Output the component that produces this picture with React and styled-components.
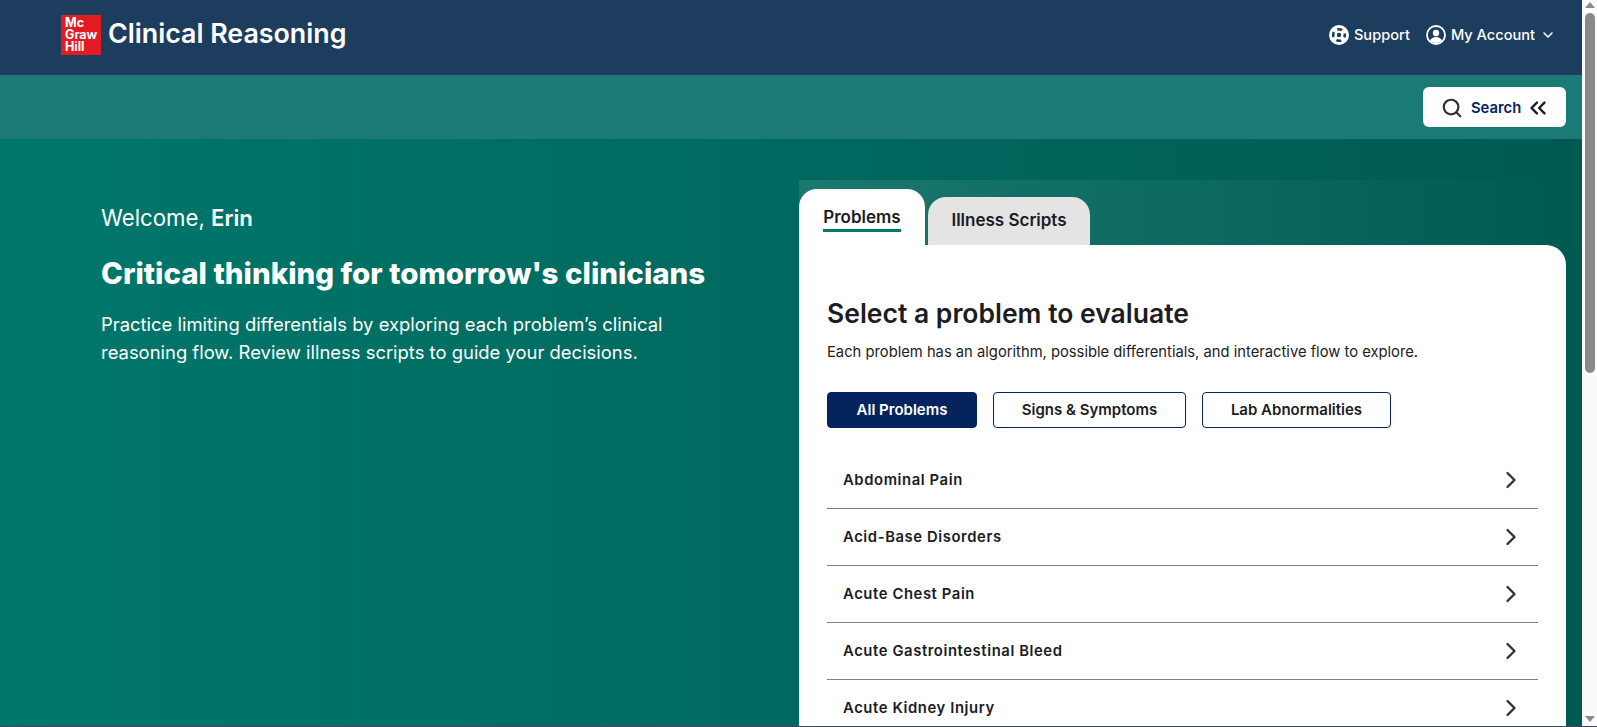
import styled, { createGlobalStyle } from "styled-components";
import { ChevronDown, ChevronRight, ChevronsLeft, Search } from "lucide-react";

const GlobalStyle = createGlobalStyle`
  html, body {
    margin: 0;
    padding: 0;
  }
  body {
    font-family: "Inter", "Liberation Sans", sans-serif;
    color: #1b1c25;
    background: #fafafa;
    padding-right: 15px;
  }
  * {
    box-sizing: border-box;
  }
`;

const Header = styled.header`
  height: 75px;
  background: #1d3d5e;
  display: flex;
  align-items: center;
  justify-content: space-between;
  padding: 0 26px 5px 61px;
  color: #fff;
`;

const Brand = styled.div`
  display: flex;
  align-items: center;
  gap: 7px;
`;

const Logo = styled.div`
  width: 40px;
  height: 40px;
  background: #e31b23;
  color: #fff;
  font-size: 12.5px;
  font-weight: 700;
  line-height: 12px;
  padding: 2px 0 0 4px;
`;

const AppName = styled.div`
  font-size: 26.8px;
  font-weight: 600;
  margin-bottom: 4px;
`;

const HeaderNav = styled.nav`
  display: flex;
  align-items: center;
  gap: 16px;
`;

const NavItem = styled.a`
  display: flex;
  align-items: center;
  gap: 5px;
  font-size: 14.6px;
  font-weight: 500;
`;

const SearchBar = styled.div`
  height: 64px;
  background: #1c7a74;
  display: flex;
  align-items: center;
  justify-content: flex-end;
  padding-right: 16px;
`;

const SearchButton = styled.button`
  width: 143px;
  height: 40px;
  background: #fff;
  border: 0;
  border-radius: 6px;
  display: flex;
  align-items: center;
  gap: 8px;
  padding: 1px 0 0 18px;
  font: 600 14.8px "Inter", sans-serif;
  color: #05235c;
  svg:first-child {
    color: #333;
  }
  svg:last-child {
    color: #1b1c25;
    margin-left: -4px;
  }
`;

const Main = styled.main`
  display: flex;
  align-items: flex-start;
  background: linear-gradient(90deg, #00776b 0%, #00695f 50%, #005a52 100%);
  padding: 41px 16px 0 0;
`;

const Intro = styled.section`
  width: 799px;
  padding: 24px 0 0 101px;
  color: #fff;
`;

const Welcome = styled.p`
  margin: 0;
  font-size: 22.2px;
  line-height: 28px;
  b {
    font-weight: 600;
  }
`;

const Headline = styled.h1`
  margin: 23px 0 0;
  font-size: 29.5px;
  line-height: 36px;
  font-weight: 800;
`;

const Lead = styled.p`
  margin: 19px 0 0;
  font-size: 18.43px;
  line-height: 28px;
  width: 590px;
`;

const Panel = styled.section`
  flex: 1;
  background: linear-gradient(90deg, rgba(255, 255, 255, 0.1), rgba(255, 255, 255, 0));
`;

const Tabs = styled.div`
  display: flex;
  align-items: flex-end;
  gap: 3px;
  height: 65px;
`;

const Tab = styled.button`
  border: 0;
  border-radius: 18px 18px 0 0;
  font: 600 17px "Inter", sans-serif;
  color: #1b1c25;
  background: ${(props) => (props.$active ? "#fff" : "#e4e4e4")};
  height: ${(props) => (props.$active ? "56px" : "48px")};
  width: ${(props) => (props.$active ? "126px" : "162px")};
  padding: ${(props) => (props.$active ? "4px 0 0" : "0 0 2px")};
  span {
    display: inline-block;
    padding-bottom: ${(props) => (props.$active ? "2px" : "0")};
    border-bottom: ${(props) => (props.$active ? "3px solid #007a6e" : "0")};
  }
`;

const Card = styled.div`
  background: #fff;
  border-radius: 0 20px 0 0;
  padding: 52px 28px 0;
`;

const Title = styled.h2`
  margin: 0;
  font-size: 26.5px;
  line-height: 32px;
  font-weight: 600;
`;

const Hint = styled.p`
  margin: 13px 0 0;
  font-size: 14.76px;
  line-height: 20px;
`;

const Filters = styled.div`
  display: flex;
  gap: 16px;
  margin-top: 30px;
`;

const Filter = styled.button`
  height: 36px;
  width: ${(props) => props.$width}px;
  border: 1px solid #05235c;
  border-radius: 4px;
  padding: 0 0 2px;
  font: 600 15px "Inter", sans-serif;
  color: ${(props) => (props.$active ? "#fff" : "#1b1c25")};
  background: ${(props) => (props.$active ? "#05235c" : "#fff")};
`;

const List = styled.ul`
  list-style: none;
  margin: 24px 0 0;
  padding: 0;
`;

const Row = styled.li`
  height: 57px;
  display: flex;
  align-items: center;
  justify-content: space-between;
  padding: 0 13px 0 16px;
  border-bottom: 1px solid #808080;
  font-size: 14.8px;
  font-weight: 600;
  letter-spacing: 0.6px;
  color: #1b1c25;
  svg {
    color: #333;
  }
`;

const Scrollbar = styled.div`
  position: fixed;
  top: 0;
  right: 0;
  bottom: 0;
  width: 15px;
  background: #fafafa;
`;

const ScrollThumb = styled.div`
  position: absolute;
  top: 13px;
  left: 3px;
  width: 10px;
  height: 360px;
  border-radius: 5px;
  background: #8a8a8a;
`;

const ScrollArrow = styled.div`
  position: absolute;
  left: 3px;
  width: 0;
  height: 0;
  border-left: 5px solid transparent;
  border-right: 5px solid transparent;
  ${(props) =>
    props.$down
      ? "bottom: 5px; border-top: 6px solid #8a8a8a;"
      : "top: 2px; border-bottom: 6px solid #8a8a8a;"}
`;

const WindowEdge = styled.div`
  position: fixed;
  left: 0;
  right: 0;
  bottom: 0;
  height: 1px;
  background: #3a4a5c;
`;

const problems = [
  "Abdominal Pain",
  "Acid-Base Disorders",
  "Acute Chest Pain",
  "Acute Gastrointestinal Bleed",
  "Acute Kidney Injury",
];

const SupportIcon = () => (
  <svg width="20" height="20" viewBox="0 0 20 20" fill="none">
    <circle cx="10" cy="10" r="10" fill="#fff" />
    <circle cx="10" cy="10" r="2.2" fill="#1d3d5e" />
    <circle
      cx="10"
      cy="10"
      r="5.8"
      stroke="#1d3d5e"
      strokeWidth="2.6"
      strokeDasharray="5 4.11"
      strokeDashoffset="2.5"
    />
  </svg>
);

const AccountIcon = () => (
  <svg width="20" height="20" viewBox="0 0 20 20" fill="none">
    <circle cx="10" cy="10" r="9" stroke="#fff" strokeWidth="1.8" />
    <circle cx="10" cy="8" r="3.2" fill="#fff" />
    <path d="M4 16c1-3 3.4-4 6-4s5 1 6 4c-3.2 2.6-8.8 2.6-12 0z" fill="#fff" />
  </svg>
);

export default function App() {
  return (
    <>
      <GlobalStyle />
      <Header>
        <Brand>
          <Logo>
            Mc
            <br />
            Graw
            <br />
            Hill
          </Logo>
          <AppName>Clinical Reasoning</AppName>
        </Brand>
        <HeaderNav>
          <NavItem>
            <SupportIcon />
            Support
          </NavItem>
          <NavItem>
            <AccountIcon />
            My Account
            <ChevronDown size={16} strokeWidth={2.4} />
          </NavItem>
        </HeaderNav>
      </Header>
      <SearchBar>
        <SearchButton>
          <Search size={22} strokeWidth={2.4} />
          Search
          <ChevronsLeft size={26} strokeWidth={2.2} />
        </SearchButton>
      </SearchBar>
      <Main>
        <Intro>
          <Welcome>
            Welcome, <b>Erin</b>
          </Welcome>
          <Headline>Critical thinking for tomorrow's clinicians</Headline>
          <Lead>
            Practice limiting differentials by exploring each problem’s clinical reasoning flow.
            Review illness scripts to guide your decisions.
          </Lead>
        </Intro>
        <Panel>
          <Tabs>
            <Tab $active>
              <span>Problems</span>
            </Tab>
            <Tab>
              <span>Illness Scripts</span>
            </Tab>
          </Tabs>
          <Card>
            <Title>Select a problem to evaluate</Title>
            <Hint>Each problem has an algorithm, possible differentials, and interactive flow to explore.</Hint>
            <Filters>
              <Filter $active $width={150}>All Problems</Filter>
              <Filter $width={193}>Signs &amp; Symptoms</Filter>
              <Filter $width={189}>Lab Abnormalities</Filter>
            </Filters>
            <List>
              {problems.map((name) => (
                <Row key={name}>
                  {name}
                  <ChevronRight size={28} strokeWidth={2} />
                </Row>
              ))}
            </List>
          </Card>
        </Panel>
      </Main>
      <Scrollbar>
        <ScrollArrow />
        <ScrollThumb />
        <ScrollArrow $down />
      </Scrollbar>
      <WindowEdge />
    </>
  );
}
